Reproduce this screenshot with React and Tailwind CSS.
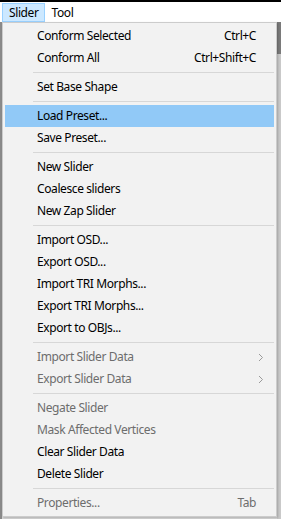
const items = [
  { label: "Conform Selected", shortcut: "Ctrl+C" },
  { label: "Conform All", shortcut: "Ctrl+Shift+C" },
  "sep",
  { label: "Set Base Shape" },
  "sep",
  { label: "Load Preset...", active: true },
  { label: "Save Preset..." },
  "sep",
  { label: "New Slider" },
  { label: "Coalesce sliders" },
  { label: "New Zap Slider" },
  "sep",
  { label: "Import OSD..." },
  { label: "Export OSD..." },
  { label: "Import TRI Morphs..." },
  { label: "Export TRI Morphs..." },
  { label: "Export to OBJs..." },
  "sep",
  { label: "Import Slider Data", disabled: true, sub: true },
  { label: "Export Slider Data", disabled: true, sub: true },
  "sep",
  { label: "Negate Slider", disabled: true },
  { label: "Mask Affected Vertices", disabled: true },
  { label: "Clear Slider Data" },
  { label: "Delete Slider" },
  "sep",
  { label: "Properties...", shortcut: "Tab", disabled: true },
];

function Chevron() {
  return (
    <svg width="6" height="9" viewBox="0 0 6 9" className="absolute right-[10px]">
      <path d="M1 1 L4.5 4.5 L1 8" fill="none" stroke="#9a9a9a" strokeWidth="1" />
    </svg>
  );
}

export default function App() {
  return (
    <div className="relative w-[281px] h-[519px] overflow-hidden bg-[#d9d9d9] text-[12px] leading-none tracking-[-0.4px]" style={{ fontFamily: "'Noto Sans', 'DejaVu Sans', sans-serif" }}>
      {/* menubar */}
      <div className="border-t-2 border-black bg-white h-[22px] flex items-start pl-[2px] pt-[1px]">
        <div className="h-[19px] px-[6px] flex items-center bg-[#cce8ff] border border-[#99d1ff] text-black">Slider</div>
        <div className="h-[19px] px-[6px] flex items-center text-black">Tool</div>
      </div>

      {/* window content behind */}
      <div className="flex h-full">
        <div className="w-[2px] bg-[#8a8a8a]" />
        <div className="flex-1" />
        <div className="w-[4px] flex flex-col">
          <div className="h-[32px] bg-[#7a7a7a]" />
          <div className="flex-1 bg-[#c9c9c9]" />
        </div>
      </div>

      {/* dropdown */}
      <div className="absolute left-[2px] top-[22px] w-[275px] bg-[#f2f2f2] border border-[#cccccc] p-[2px] shadow-[1px_1px_2px_rgba(0,0,0,0.2)]">
        {items.map((it, i) =>
          it === "sep" ? (
            <div key={i} className="h-[7px] flex items-center pl-[28px]">
              <div className="h-px w-full bg-[#d7d7d7]" />
            </div>
          ) : (
            <div
              key={i}
              className={
                "relative h-[22px] flex items-center pl-[32px] pr-[18px] " +
                (it.active ? "bg-[#91c9f7] " : "") +
                (it.disabled ? "text-[#6d6d6d]" : "text-black")
              }
            >
              <span className="flex-1 whitespace-nowrap">{it.label}</span>
              {it.shortcut && <span className="whitespace-nowrap">{it.shortcut}</span>}
              {it.sub && <Chevron />}
            </div>
          )
        )}
      </div>
    </div>
  );
}
